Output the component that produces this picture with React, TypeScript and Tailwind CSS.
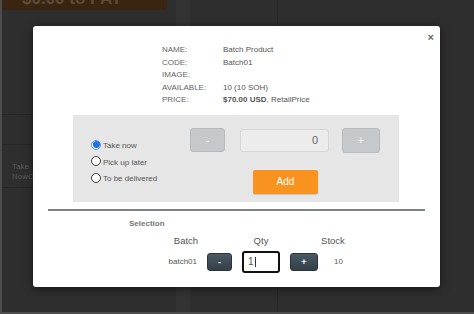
const INFO = [
  { label: "NAME:", value: "Batch Product" },
  { label: "CODE:", value: "Batch01" },
  { label: "IMAGE:", value: "" },
  { label: "AVAILABLE:", value: "10 (10 SOH)" },
]

const OPTIONS = ["Take now", "Pick up later", "To be delivered"]

function Radio({ checked }: { checked: boolean }) {
  if (checked) {
    return (
      <span className="flex h-[10px] w-[10px] items-center justify-center rounded-full border border-[#5b9cf0] bg-white">
        <span className="h-[7px] w-[7px] rounded-full bg-[#1f6fe5]" />
      </span>
    )
  }
  return <span className="h-[10px] w-[10px] rounded-full border border-[#3a3a3a] bg-white" />
}

export default function App() {
  return (
    <div className="relative h-[314px] w-[474px] overflow-hidden bg-[#2e2e2e] font-['Liberation_Sans',Arial,sans-serif]">
      {/* page behind the overlay */}
      <div className="flex h-full border-b-2 border-l-2 border-[#4d4d4d]">
        <div className="flex w-[174px] flex-col">
          <div className="h-[10px] w-[165px] overflow-hidden rounded-br-[2px] bg-[#3a2512]">
            <div className="-mt-[10px] pl-[20px] text-[17px] font-bold leading-[18px] text-[#5e4b39]">
              $0.00 to PAY
            </div>
          </div>
          <div className="h-[105px] border-b border-[#262626]" />
          <div className="h-[30px] border-b border-[#262626]" />
          <div className="h-[43px] border-b border-[#262626] pl-[10px] pt-[17px] text-[8px] leading-[10px] text-[#5a5a5a]">
            Take
            <br />
            NowC
          </div>
        </div>
        <div className="w-[14px] bg-[#333333]" />
        <div className="w-[88px] border-r border-[#262626]">
          <div className="-mt-[9px] pl-[12px] text-[10px] leading-[12px] text-[#5a5a5a]">Search Results</div>
        </div>
        <div className="flex-1" />
      </div>

      {/* modal */}
      <div className="absolute left-[33px] top-[26px] h-[261px] w-[407px] rounded-[3px] bg-white shadow-[0_2px_8px_rgba(0,0,0,0.5)]">
        <span className="absolute right-[6px] top-[5px] text-[11px] font-bold leading-[12px] text-[#666]">×</span>

        <div className="pl-[129px] pt-[18px] text-[8px] leading-[12.5px] text-[#666]">
          {INFO.map((row) => (
            <div key={row.label} className="flex">
              <span className="w-[61px]">{row.label}</span>
              <span className="text-[#555]">{row.value}</span>
            </div>
          ))}
          <div className="flex">
            <span className="w-[61px]">PRICE:</span>
            <span className="text-[#555]">
              <span className="font-bold">$70.00 USD</span>, RetailPrice
            </span>
          </div>
        </div>

        <div className="ml-[40px] mt-[8px] flex h-[87px] w-[326px] bg-[#e6e6e6] pt-[13px]">
          <div className="mt-[9px] flex w-[117px] flex-col pl-[18px]">
            {OPTIONS.map((opt, i) => (
              <div key={opt} className="flex h-[16.5px] items-center gap-[2px] text-[8px] text-[#555]">
                <Radio checked={i === 0} />
                <span className="mt-[3px]">{opt}</span>
              </div>
            ))}
          </div>
          <div className="flex w-[190px] flex-col items-center">
            <div className="flex w-full items-center">
              <button className="h-[24px] w-[35px] rounded-[3px] border border-[#b8bbbe] bg-[#c6c9cc] text-[10px] text-white">
                -
              </button>
              <div className="ml-[15px] flex h-[23px] w-[89px] items-center justify-end rounded-[3px] border border-[#d6d6d6] bg-[#ececec] pr-[10px] text-[11px] text-[#666]">
                0
              </div>
              <button className="ml-[13px] h-[25px] w-[38px] rounded-[3px] border border-[#b8bbbe] bg-[#c6c9cc] text-[10px] text-white">
                +
              </button>
            </div>
            <button className="ml-[1px] mt-[17px] h-[24px] w-[65px] rounded-[2px] bg-[#f7931e] text-[10px] text-white shadow-[0_1px_1px_rgba(0,0,0,0.15)]">
              Add
            </button>
          </div>
        </div>

        <div className="mx-[15px] mt-[7px] h-[2px] bg-[#7d8388]" />

        <div className="pl-[96px] pt-[8px] text-[8px] font-bold leading-[10px] text-[#777]">Selection</div>

        <div className="ml-[132px] mt-[6px] flex flex-col text-[#555]">
          <div className="flex h-[13px] items-center text-[9.5px]">
            <span className="w-[42px] text-center">Batch</span>
            <span className="w-[35px]" />
            <span className="w-[38px] text-center">Qty</span>
            <span className="w-[38px]" />
            <span className="w-[30px] text-center">Stock</span>
          </div>
          <div className="mt-[3px] flex h-[22px] items-center text-[8px]">
            <span className="w-[42px] pr-[10px] text-right">batch01</span>
            <button className="h-[18px] w-[25px] rounded-[3px] border border-[#2b343c] bg-gradient-to-b from-[#4a5864] to-[#34404a] text-[9px] font-bold leading-[16px] text-white">
              -
            </button>
            <div className="ml-[10px] flex h-[22px] w-[38px] items-center rounded-[3px] border-2 border-[#111] bg-white pl-[4px] text-[10px] text-[#555]">
              1<span className="ml-[1px] h-[10px] w-[1px] bg-[#333]" />
            </div>
            <button className="ml-[10px] h-[18px] w-[28px] rounded-[3px] border border-[#2b343c] bg-gradient-to-b from-[#4a5864] to-[#34404a] text-[9px] font-bold leading-[16px] text-white">
              +
            </button>
            <span className="w-[30px] pl-[16px] text-[#666]">10</span>
          </div>
        </div>
      </div>
    </div>
  )
}
